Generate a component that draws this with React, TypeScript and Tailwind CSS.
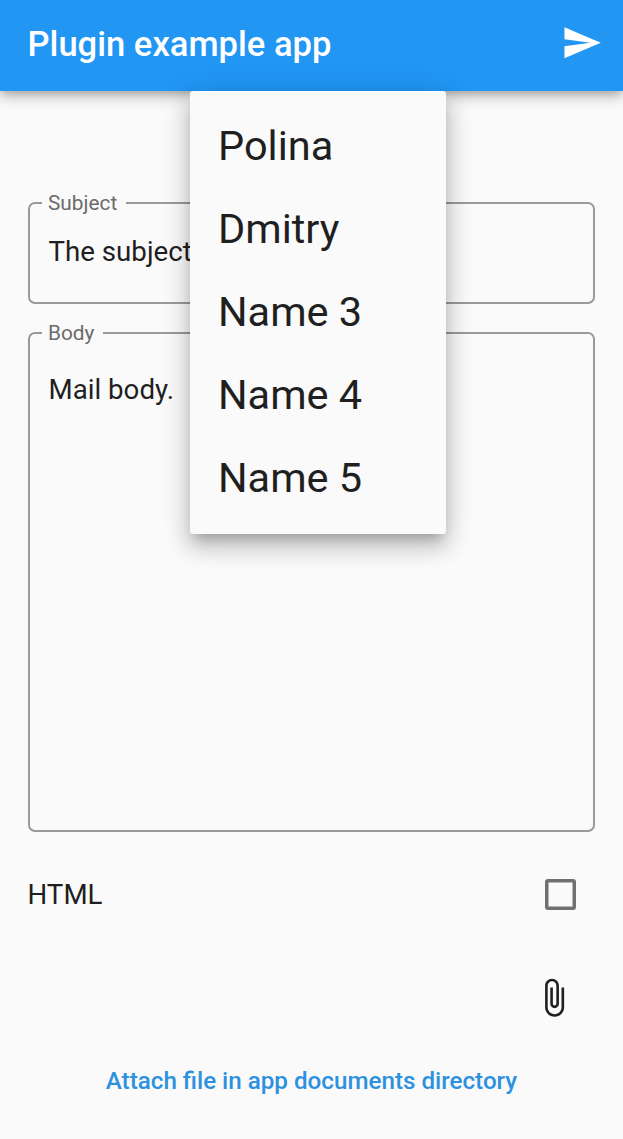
import type { ReactNode } from "react";
import { MdAttachFile } from "react-icons/md";

const names = ["Polina", "Dmitry", "Name 3", "Name 4", "Name 5"];

function SendIcon() {
  return (
    <svg viewBox="0 0 24 24" className="size-[41.5px]" fill="currentColor" aria-label="Send">
      <path d="M2.01 21L23 12 2.01 3 2 10l15 2-15 2z" />
    </svg>
  );
}

function OutlinedField({
  label,
  className,
  children,
}: {
  label: string;
  className: string;
  children: ReactNode;
}) {
  return (
    <fieldset
      className={`mx-[28px] min-w-0 rounded-[7px] border-2 border-[#999999] pl-[12px] ${className}`}
    >
      <legend className="h-[24px] pr-[9px] pl-[6px] text-[20.8px] leading-[24px] text-[#6b6b6b]">
        {label}
      </legend>
      {children}
    </fieldset>
  );
}

function NameMenu() {
  return (
    <ul
      role="menu"
      className="absolute top-[91px] left-[190px] h-[443px] w-[256px] rounded-[3px] bg-[#fafafa] pt-[13px] shadow-[0_9px_11px_-5px_rgba(0,0,0,0.2),0_14px_21px_2px_rgba(0,0,0,0.14),0_5px_28px_3px_rgba(0,0,0,0.12)]"
    >
      {names.map((name) => (
        <li
          key={name}
          role="menuitem"
          className="flex h-[83px] items-center pl-[28px] text-[41.5px] leading-none"
        >
          {name}
        </li>
      ))}
    </ul>
  );
}

export default function App() {
  return (
    <div className="relative flex h-[1139px] w-full flex-col overflow-hidden bg-[#fafafa] font-['Roboto',sans-serif] text-[#1f1f1f]">
      <header className="flex h-[91px] shrink-0 items-start justify-between bg-[#2196f3] pt-[22px] pr-[21px] pl-[27.5px] text-white shadow-[0_3px_8px_-2px_rgba(0,0,0,0.2),0_7px_11px_0_rgba(0,0,0,0.14),0_2px_20px_0_rgba(0,0,0,0.12)]">
        <h1 className="mt-[2px] text-[34.6px] leading-[40px] font-medium">Plugin example app</h1>
        <SendIcon />
      </header>

      <main className="flex flex-col">
        <OutlinedField label="Subject" className="mt-[100px] h-[113px]">
          <p className="mt-[21px] pl-[6.5px] text-[27.7px] leading-[32px]">The subject</p>
        </OutlinedField>
        <OutlinedField label="Body" className="mt-[17px] h-[511px]">
          <p className="mt-[29px] pl-[6.5px] text-[27.7px] leading-[32px]">Mail body.</p>
        </OutlinedField>

        <div className="mt-[21px] flex h-[83px] items-center justify-between pr-[47px] pl-[27.5px]">
          <span className="text-[27.7px] leading-[32px]">HTML</span>
          <span
            role="checkbox"
            aria-checked="false"
            className="size-[31px] rounded-[3px] shadow-[inset_0_0_0_3.5px_#707070]"
          />
        </div>

        <div className="mt-[41px] flex justify-end pr-[49px]">
          <MdAttachFile className="size-[41.5px]" aria-label="Attach file" />
        </div>

        <button className="mt-[47px] text-center text-[24.2px] leading-[30px] font-medium text-[#2d91e0]">
          Attach file in app documents directory
        </button>
      </main>

      <NameMenu />
    </div>
  );
}
